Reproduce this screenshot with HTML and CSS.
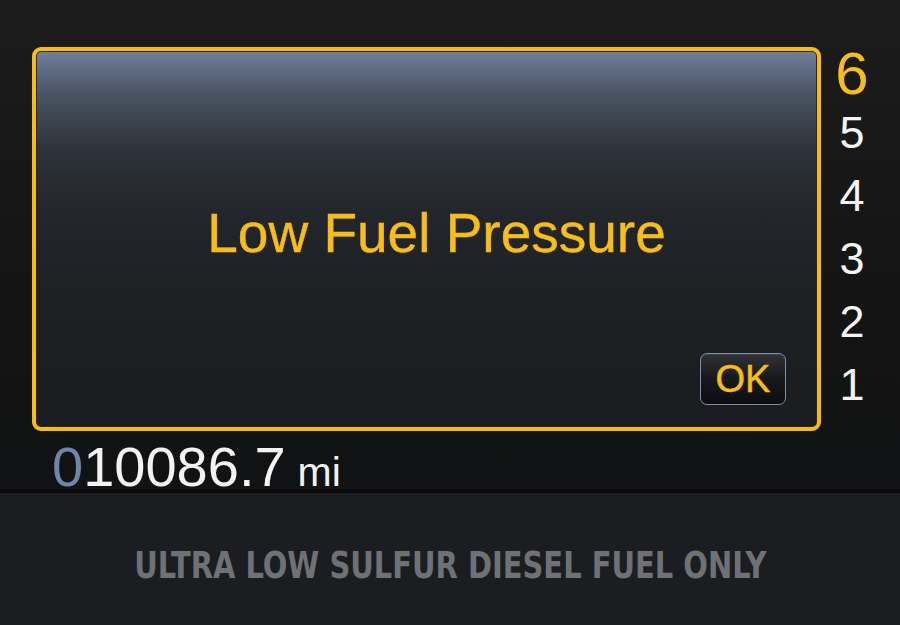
FILE: index.html
```html
<!DOCTYPE html>
<html lang="en">
<head>
    <meta charset="UTF-8">
    <meta name="viewport" content="width=device-width, initial-scale=1.0">
    <title>Message Center</title>
    <link rel="stylesheet" href="styles.css">
</head>
<body>
    <div class="cluster">
        <div class="top-row">
            <div class="msg-box">
                <div class="msg-text">Low Fuel Pressure</div>
                <div class="msg-actions">
                    <div class="ok-btn">OK</div>
                </div>
            </div>
            <div class="gears">
                <div class="gear current">6</div>
                <div class="gear">5</div>
                <div class="gear">4</div>
                <div class="gear">3</div>
                <div class="gear">2</div>
                <div class="gear">1</div>
            </div>
        </div>
        <div class="odometer">
            <span class="lead">0</span><span class="miles">10086.7</span><span class="unit">mi</span>
        </div>
    </div>
    <div class="panel">
        <div class="fuel-label">ULTRA LOW SULFUR DIESEL FUEL ONLY</div>
    </div>
</body>
</html>
```

FILE: styles.css
```css
body {
    margin: 0;
    width: 900px;
    height: 625px;
    overflow: hidden;
    background-color: #1b1d20;
    font-family: 'Liberation Sans', Arial, sans-serif;
}
.cluster {
    height: 493px;
    box-sizing: border-box;
    padding: 47px 0 0 32px;
    background: linear-gradient(#1c1c1c, #141414 60%, #111213);
    border-bottom: 4px solid #0b0b0c;
}
.top-row {
    display: flex;
}
.msg-box {
    width: 789px;
    height: 384px;
    box-sizing: border-box;
    border: 4px solid #f5bb17;
    border-radius: 9px;
    box-shadow: inset 0 0 0 1px #2a2410;
    background: linear-gradient(#71819a 0%, #4b5564 11%, #2e333a 26%, #23262b 42%, #1e2024 65%, #1b1c20 100%);
    display: flex;
    flex-direction: column;
}
.msg-text {
    padding: 155px 0 0 20px;
    text-align: center;
    font-size: 55px;
    line-height: 1;
    color: #f7bd18;
    -webkit-text-stroke: 0.4px #f7bd18;
}
.msg-actions {
    margin-top: auto;
    display: flex;
    justify-content: flex-end;
    padding: 0 31px 22px 0;
}
.ok-btn {
    width: 86px;
    height: 52px;
    box-sizing: border-box;
    border: 1px solid #7d8ea8;
    border-radius: 7px;
    background: linear-gradient(#2f3236, #18191c 50%, #0c0d0f);
    box-shadow: inset 0 1px 0 rgba(255, 255, 255, 0.08);
    color: #f7bd18;
    font-size: 38px;
    line-height: 50px;
    text-align: center;
    -webkit-text-stroke: 0.5px #f7bd18;
}
.gears {
    width: 62px;
    display: flex;
    flex-direction: column;
    align-items: center;
    color: #f4f4f4;
}
.gear {
    font-size: 45px;
    height: 63px;
    line-height: 63px;
}
.gear.current {
    color: #f7bd18;
    font-size: 60px;
    height: 54px;
    line-height: 54px;
}
.odometer {
    padding: 8px 0 0 20px;
    line-height: 1;
    color: #f2f2f2;
    white-space: nowrap;
}
.odometer .lead,
.odometer .miles {
    font-size: 56px;
}
.odometer .lead {
    color: #6e86aa;
}
.odometer .unit {
    font-size: 41px;
    margin-left: 12px;
}
.panel {
    height: 128px;
    display: flex;
    justify-content: center;
    padding-top: 54px;
    box-sizing: border-box;
}
.fuel-label {
    font-family: 'DejaVu Sans Condensed', 'Liberation Sans', sans-serif;
    font-weight: bold;
    font-size: 37px;
    line-height: 1;
    color: #6e7175;
    white-space: nowrap;
    transform: scaleX(0.87);
}
```
